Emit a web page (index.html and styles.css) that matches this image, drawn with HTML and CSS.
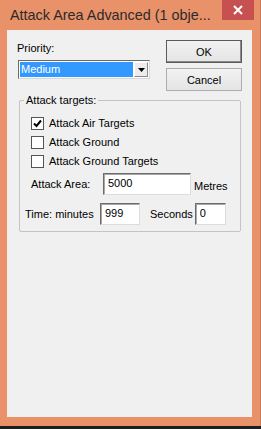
FILE: index.html
```html
<!DOCTYPE html>
<html lang="en">
<head>
    <meta charset="UTF-8">
    <meta name="viewport" content="width=device-width, initial-scale=1.0">
    <title>Attack Area Advanced</title>
    <link rel="stylesheet" href="styles.css">
</head>
<body>
    <div class="window">
        <div class="titlebar">
            <span class="title">Attack Area Advanced (1 obje...</span>
            <div class="close">
                <svg width="10" height="10" viewBox="0 0 10 10">
                    <path d="M1 1 L9 9 M9 1 L1 9" stroke="#ffffff" stroke-width="2"/>
                </svg>
            </div>
        </div>

        <div class="client">
            <div class="top-row">
                <div class="priority">
                    <label class="label">Priority:</label>
                    <div class="select">
                        <span class="select-value">Medium</span>
                        <span class="select-arrow">
                            <svg width="7" height="4" viewBox="0 0 7 4"><path d="M0 0 H7 L3.5 4 Z" fill="#000"/></svg>
                        </span>
                    </div>
                </div>
                <div class="buttons">
                    <button class="btn btn-default">OK</button>
                    <button class="btn">Cancel</button>
                </div>
            </div>

            <fieldset class="group">
                <legend class="legend">Attack targets:</legend>

                <div class="check-row">
                    <span class="checkbox">
                        <svg width="9" height="9" viewBox="0 0 9 9"><path d="M1 4.5 L3.5 7 L8 1.5" stroke="#000" stroke-width="2" fill="none"/></svg>
                    </span>
                    <span>Attack Air Targets</span>
                </div>
                <div class="check-row">
                    <span class="checkbox"></span>
                    <span>Attack Ground</span>
                </div>
                <div class="check-row">
                    <span class="checkbox"></span>
                    <span>Attack Ground Targets</span>
                </div>

                <div class="field-row area-row">
                    <span class="area-label">Attack Area:</span>
                    <input type="text" class="edit edit-area" value="5000">
                    <span class="units">Metres</span>
                </div>

                <div class="field-row time-row">
                    <span class="time-label">Time: minutes</span>
                    <input type="text" class="edit edit-min" value="999">
                    <span class="sec-label">Seconds</span>
                    <input type="text" class="edit edit-sec" value="0">
                </div>
            </fieldset>
        </div>
    </div>
</body>
</html>
```

FILE: styles.css
```css
:root {
  --frame: #e9926a;
  --close: #c75050;
  --face: #f0f0f0;
  --text: #000000;
  --highlight: #3399ff;
  --dlg: 11px;
}
body {
  margin: 0;
  background-color: #1e1e1e;
  font-family: 'Liberation Sans', Arial, sans-serif;
}
.window {
  width: 261px;
  height: 426px;
  background-color: var(--frame);
  display: flex;
  flex-direction: column;
  box-shadow: inset -3px 0 0 -2px #c97a55;
}
.titlebar {
  height: 30px;
  display: flex;
  align-items: flex-start;
}
.title {
  margin: 7px 0 0 10px;
  font-size: 14.4px;
  line-height: 16px;
  color: #2b2b2b;
  white-space: nowrap;
}
.close {
  margin-left: auto;
  margin-right: 7px;
  width: 32px;
  height: 20px;
  background-color: var(--close);
  display: flex;
  align-items: center;
  justify-content: center;
}
.client {
  margin: 0 9px 0 7px;
  height: 387px;
  background-color: var(--face);
  font-size: var(--dlg);
  line-height: 13px;
  color: var(--text);
  padding-top: 10px;
  box-sizing: border-box;
}

/* priority + buttons */
.top-row {
  display: flex;
}
.priority {
  margin-left: 10px;
  display: flex;
  flex-direction: column;
}
.label {
  margin-top: 2px;
}
.select {
  margin: 5px 0 0 1px;
  width: 132px;
  height: 19px;
  box-sizing: border-box;
  background: #ffffff;
  border: 1px solid;
  border-color: #6b6b6b #d8d8d8 #d8d8d8 #6b6b6b;
  padding: 1px;
  display: flex;
}
.select-value {
  flex: 1;
  background-color: var(--highlight);
  color: #ffffff;
  padding-left: 1px;
  line-height: 15px;
  margin-right: 1px;
}
.select-arrow {
  width: 14px;
  box-sizing: border-box;
  background: #ececec;
  border: 1px solid;
  border-color: #ffffff #8a8a8a #8a8a8a #ffffff;
  display: flex;
  align-items: center;
  justify-content: center;
}
.buttons {
  margin-left: auto;
  margin-right: 10px;
  display: flex;
  flex-direction: column;
  gap: 5px;
}
.btn {
  width: 76px;
  height: 23px;
  padding: 0;
  font-family: inherit;
  font-size: var(--dlg);
  color: var(--text);
  background: linear-gradient(#f2f2f2, #e4e4e4);
  border: 1px solid #adadad;
  border-radius: 0;
}
.btn-default {
  border-color: #5a5a5a;
  box-shadow: inset -1px -1px 0 #8a8a8a;
}

/* group box */
.group {
  margin: 3px 11px 0 12px;
  padding: 7px 0 6px 0;
  border: 1px solid #c4c4c4;
  border-radius: 2px;
}
.legend {
  margin-left: 4px;
  padding: 0 2px;
}
.check-row {
  height: 19px;
  display: flex;
  align-items: center;
  gap: 5px;
  padding-left: 11px;
}
.checkbox {
  width: 13px;
  height: 13px;
  box-sizing: border-box;
  border: 1px solid #555555;
  background: #ffffff;
  display: flex;
  align-items: center;
  justify-content: center;
}
.field-row {
  display: flex;
  align-items: center;
}
.area-row {
  margin-top: 2px;
  padding-left: 11px;
}
.area-label {
  width: 72px;
}
.units {
  margin: 4px 0 0 3px;
}
.time-row {
  margin-top: 8px;
  padding-left: 5px;
}
.time-label {
  width: 75px;
}
.sec-label {
  margin: 0 2px 0 10px;
}
.edit {
  height: 22px;
  box-sizing: border-box;
  margin: 0;
  padding: 0 4px 3px 4px;
  font-family: inherit;
  font-size: var(--dlg);
  color: var(--text);
  background: #ffffff;
  border: 1px solid;
  border-color: #6b6b6b #dcdcdc #dcdcdc #6b6b6b;
  box-shadow: inset 1px 1px 0 #a8a8a8;
  outline: none;
}
.edit-area {
  width: 88px;
}
.edit-min {
  width: 40px;
}
.edit-sec {
  width: 31px;
}
```
